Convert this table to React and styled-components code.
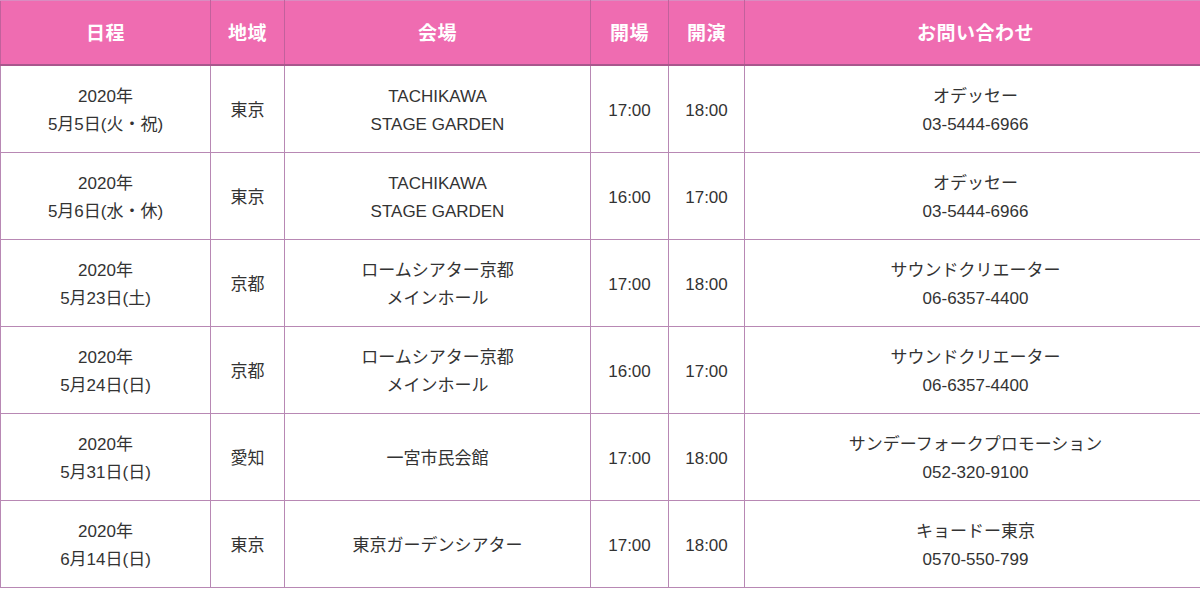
import React from 'react';
import styled, { createGlobalStyle } from 'styled-components';

const GlobalStyle = createGlobalStyle`
  html, body {
    margin: 0;
    padding: 0;
    background: #ffffff;
  }
  body {
    font-family: "Liberation Sans", "Noto Sans CJK JP", sans-serif;
    color: #333333;
  }
`;

const Table = styled.table`
  width: 1200px;
  border-collapse: collapse;
  table-layout: fixed;
  border: 1px solid #b888b4;
`;

const HeadCell = styled.th`
  width: ${({ w }) => w}px;
  height: 61px;
  background: #ef6cb1;
  color: #ffffff;
  font-family: "Noto Sans CJK JP", sans-serif;
  font-size: 19px;
  font-weight: 700;
  text-align: center;
  vertical-align: middle;
  padding: 0 0 2px;
  border: 1px solid #c2619c;
  border-bottom: 2px solid #a9578d;
  border-top: 1px solid #d98cc1;
  letter-spacing: 0.5px;
`;

const Cell = styled.td`
  box-sizing: border-box;
  height: 87px;
  padding: 4px 0 0;
  text-align: center;
  vertical-align: middle;
  font-size: 17px;
  line-height: 28px;
  color: #333333;
  border: 1px solid #b888b4;
`;

const Line = styled.div`
  white-space: nowrap;
`;

const columns = [
  { label: '日程', w: 209 },
  { label: '地域', w: 73 },
  { label: '会場', w: 305 },
  { label: '開場', w: 77 },
  { label: '開演', w: 75 },
  { label: 'お問い合わせ', w: 461 },
];

const rows = [
  { date: ['2020年', '5月5日(火・祝)'], area: '東京', venue: ['TACHIKAWA', 'STAGE GARDEN'], open: '17:00', start: '18:00', contact: ['オデッセー', '03-5444-6966'] },
  { date: ['2020年', '5月6日(水・休)'], area: '東京', venue: ['TACHIKAWA', 'STAGE GARDEN'], open: '16:00', start: '17:00', contact: ['オデッセー', '03-5444-6966'] },
  { date: ['2020年', '5月23日(土)'], area: '京都', venue: ['ロームシアター京都', 'メインホール'], open: '17:00', start: '18:00', contact: ['サウンドクリエーター', '06-6357-4400'] },
  { date: ['2020年', '5月24日(日)'], area: '京都', venue: ['ロームシアター京都', 'メインホール'], open: '16:00', start: '17:00', contact: ['サウンドクリエーター', '06-6357-4400'] },
  { date: ['2020年', '5月31日(日)'], area: '愛知', venue: ['一宮市民会館'], open: '17:00', start: '18:00', contact: ['サンデーフォークプロモーション', '052-320-9100'] },
  { date: ['2020年', '6月14日(日)'], area: '東京', venue: ['東京ガーデンシアター'], open: '17:00', start: '18:00', contact: ['キョードー東京', '0570-550-799'] },
];

const Lines = ({ items }) => items.map((t) => <Line key={t}>{t}</Line>);

const App = () => {
  return (
    <>
      <GlobalStyle />
      <Table>
        <thead>
          <tr>
            {columns.map((c) => (
              <HeadCell key={c.label} w={c.w}>{c.label}</HeadCell>
            ))}
          </tr>
        </thead>
        <tbody>
          {rows.map((r, i) => (
            <tr key={i}>
              <Cell><Lines items={r.date} /></Cell>
              <Cell>{r.area}</Cell>
              <Cell><Lines items={r.venue} /></Cell>
              <Cell>{r.open}</Cell>
              <Cell>{r.start}</Cell>
              <Cell><Lines items={r.contact} /></Cell>
            </tr>
          ))}
        </tbody>
      </Table>
    </>
  );
};

export default App;
